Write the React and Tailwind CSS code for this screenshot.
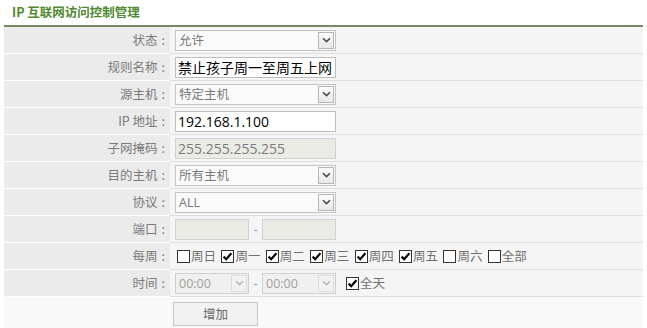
import React from 'react';

const cjk = "font-['Noto_Sans_CJK_SC','Noto_Sans',sans-serif]";

function Chevron({ disabled }) {
    return (
        <svg width="9" height="6" viewBox="0 0 9 6">
            <path
                d="M1 1.2 L4.5 4.6 L8 1.2"
                fill="none"
                stroke={disabled ? '#b8b8b8' : '#4a4a4a'}
                strokeWidth="1.6"
            />
        </svg>
    );
}

function Select({ value, width = 'w-[161px]', disabled }) {
    return (
        <div
            className={`${width} h-[21px] flex items-stretch border ${
                disabled ? 'border-[#cfcfcf] bg-[#f0f0f0] text-[#a0a0a0]' : 'border-[#c4c4c4] bg-[#fafafa] text-[#7a7a7a]'
            }`}
        >
            <span className="flex-1 pl-[3px] text-[12.5px] leading-[19px] font-['Open_Sans','Noto_Sans_CJK_SC',sans-serif]">
                {value}
            </span>
            <span
                className={`w-[16px] m-[1px] flex items-center justify-center border ${
                    disabled ? 'border-[#dcdcdc] bg-[#f2f2f2]' : 'border-[#b5b5b5] bg-gradient-to-b from-[#fdfdfd] to-[#e8e8e8]'
                }`}
            >
                <Chevron disabled={disabled} />
            </span>
        </div>
    );
}

function TextInput({ value, width = 'w-[161px]', disabled }) {
    return (
        <div
            className={`${width} h-[21px] border pl-[2px] overflow-hidden whitespace-nowrap text-[14px] leading-[19px] font-['Open_Sans','Noto_Sans_CJK_SC',sans-serif] ${
                disabled ? 'border-[#d2d2d2] bg-[#ebebe6] text-[#7a7a7a]' : 'border-[#bdbdbd] bg-white text-black'
            }`}
        >
            {value}
        </div>
    );
}

function Check({ checked, label }) {
    return (
        <span className="flex items-center">
            <span className="w-[13px] h-[13px] border border-[#333] bg-white flex items-center justify-center">
                {checked && (
                    <svg width="11" height="11" viewBox="0 0 11 11">
                        <path d="M1.6 5.6 L4.2 8.2 L9.4 2.2" fill="none" stroke="#000" strokeWidth="2.2" />
                    </svg>
                )}
            </span>
            <span className="ml-[1px] text-[12.5px] text-[#707070]">{label}</span>
        </span>
    );
}

function Row({ label, children }) {
    return (
        <div className="flex h-[27px]">
            <div className="w-[166px] bg-[#ebebeb] border-b border-white flex items-center justify-end pr-[5px] text-[12.5px] text-[#7a7a7a]">
                {label}
                <span className="ml-[4px]">:</span>
            </div>
            <div className="flex-1 bg-[#f5f5f5] border-b border-[#dedede] flex items-center pl-[5px]">
                {children}
            </div>
        </div>
    );
}

export default function App() {
    const days = [
        ['周日', false],
        ['周一', true],
        ['周二', true],
        ['周三', true],
        ['周四', true],
        ['周五', true],
        ['周六', false],
        ['全部', false],
    ];

    return (
        <div className={`w-[647px] h-[328px] bg-white px-[4px] ${cjk}`}>
            <div className="h-[25px] pl-[8px] flex items-center text-[12.5px] font-bold text-[#4f8a2e]">
                IP 互联网访问控制管理
            </div>
            <div className="w-[639px] border-t-2 border-[#6e8c5e]">
                <Row label="状态">
                    <Select value="允许" />
                </Row>
                <Row label="规则名称">
                    <TextInput value="禁止孩子周一至周五上网" />
                </Row>
                <Row label="源主机">
                    <Select value="特定主机" />
                </Row>
                <Row label="IP 地址">
                    <TextInput value="192.168.1.100" />
                </Row>
                <Row label="子网掩码">
                    <TextInput value="255.255.255.255" disabled />
                </Row>
                <Row label="目的主机">
                    <Select value="所有主机" />
                </Row>
                <Row label="协议">
                    <Select value="ALL" />
                </Row>
                <Row label="端口">
                    <TextInput value="" width="w-[74px]" disabled />
                    <span className="w-[13px] text-center text-[12px] text-[#888]">-</span>
                    <TextInput value="" width="w-[74px]" disabled />
                </Row>
                <Row label="每周">
                    <div className="flex items-center gap-[5.4px] pl-[2px]">
                        {days.map(([d, c]) => (
                            <Check key={d} checked={c} label={d} />
                        ))}
                    </div>
                </Row>
                <Row label="时间">
                    <Select value="00:00" width="w-[74px]" disabled />
                    <span className="w-[13px] text-center text-[12px] text-[#888]">-</span>
                    <Select value="00:00" width="w-[74px]" disabled />
                    <span className="ml-[10px]">
                        <Check checked label="全天" />
                    </span>
                </Row>
                <div className="flex h-[32px] bg-[#f9f9f9]">
                    <div className="w-[166px]" />
                    <div className="pl-[3px] pt-[3px]">
                        <button className="w-[85px] h-[24px] border border-[#c8c8c8] bg-[#f2f2f2] text-[12.5px] text-[#666]">
                            增加
                        </button>
                    </div>
                </div>
            </div>
        </div>
    );
}
